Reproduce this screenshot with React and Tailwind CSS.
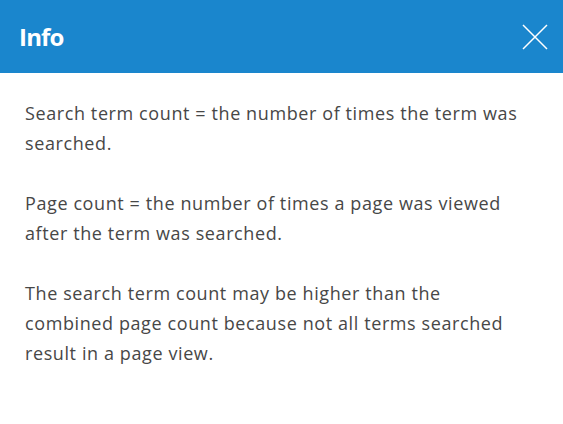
export default function App() {
  return (
    <div className="w-[563px] h-[424px] bg-white" style={{ fontFamily: '"Open Sans", sans-serif' }}>
      <div className="h-[73px] bg-[#1a86cd] flex items-center justify-between pl-[19px] pr-[14px]">
        <h2 className="text-white text-[24px] font-bold tracking-[-0.8px]">Info</h2>
        <button className="w-[28px] h-[28px] flex items-center justify-center text-white">
          <svg width="26" height="26" viewBox="0 0 26 26" fill="none" stroke="currentColor" strokeWidth="1.5">
            <path d="M1 1L25 25M25 1L1 25" />
          </svg>
        </button>
      </div>
      <div className="pl-[25px] pr-[38px] pt-[25px] text-[18px] leading-[30px] tracking-[0.6px] text-[#474747]">
        <p className="mb-[30px]">Search term count = the number of times the term was searched.</p>
        <p className="mb-[30px]">Page count = the number of times a page was viewed after the term was searched.</p>
        <p>The search term count may be higher than the combined page count because not all terms searched result in a page view.</p>
      </div>
    </div>
  );
}
